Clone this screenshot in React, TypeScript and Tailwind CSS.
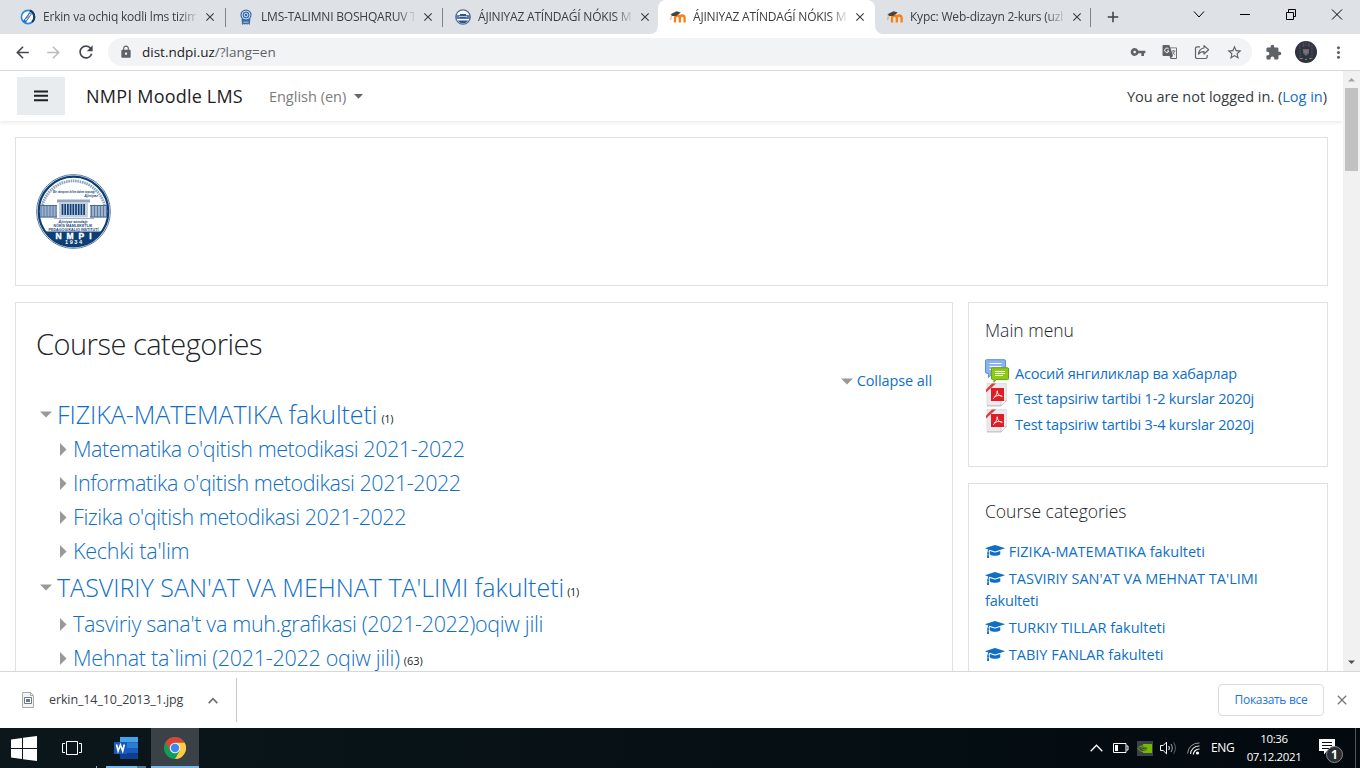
import React from "react";
import { MdVpnKey, MdExtension, MdStarBorder, MdMoreVert, MdLock, MdRefresh, MdArrowBack, MdArrowForward, MdClose, MdAdd } from "react-icons/md";

const UI = "font-['Open_Sans','Noto_Sans',sans-serif]";

function Seal({ size }: { size: number }) {
  const bars = Array.from({ length: 9 }, (_, i) => 26.5 + i * 2.7);
  const wings = Array.from({ length: 6 }, (_, i) => i * 3);
  return (
    <svg width={size} height={size} viewBox="0 0 75 75">
      <circle cx="37.5" cy="37.5" r="36.9" fill="#fff" stroke="#5b7ba3" strokeWidth="1" />
      <circle cx="37.5" cy="37.5" r="34.8" fill="#fff" stroke="#0d3f76" strokeWidth="2.2" />
      <path d="M6.5 31a32 32 0 0 1 62 0" fill="none" stroke="#8fa5c0" strokeWidth="2.8" strokeDasharray="1.6 .7" />
      <path d="M9.500 57.500h56a34 34 0 0 1-56 0z" fill="#0d3f76" />
      <path d="M4 31.5h17v12H4zM54 31.5h17v12H54z" fill="#9fb2c9" />
      {wings.map((x) => (
        <path key={x} d={`M${5 + x} 32v11M${55.5 + x} 32v11`} stroke="#567aa3" strokeWidth="1" />
      ))}
      <path d="M4 31.5h17M54 31.5h17M4 43h17M54 43h17" stroke="#456b98" strokeWidth="1" />
      <path d="M21 25.5h33v3H21z" fill="#8fa5c0" />
      <path d="M23 28.5h29v15H23z" fill="#c5d0de" />
      {bars.map((x) => (
        <path key={x} d={`M${x} 30v11`} stroke="#0d3f76" strokeWidth="1.7" />
      ))}
      <path d="M18 44.5h40" stroke="#9fb2c9" strokeWidth="1" />
      <g fontFamily="Liberation Sans, sans-serif" fontWeight="bold" fill="#1c4a7e" textAnchor="middle">
        <text x="38" y="19" fontSize="4.2" fontStyle="italic" textLength="42" lengthAdjust="spacingAndGlyphs">Bir tárepten bilim ádem tapsaǵı</text>
        <text x="55" y="23" fontSize="3.6" fontStyle="italic">Ájiniyaz</text>
        <text x="37" y="48.800" fontSize="4.400" fontStyle="italic" textLength="29" lengthAdjust="spacingAndGlyphs">Ájiniyaz atındaǵı</text>
        <text x="37" y="53" fontSize="4.400" textLength="39" lengthAdjust="spacingAndGlyphs">NÓKIS MÁMLEKETLIK</text>
        <text x="37.5" y="57.2" fontSize="4.400" textLength="50" lengthAdjust="spacingAndGlyphs">PEDAGOGIKALIQ INSTITUTÍ</text>
        <text x="37.5" y="65" fontSize="8.500" fill="#fff" stroke="#fff" strokeWidth=".4" textLength="36" lengthAdjust="spacing">NMPI</text>
        <text x="37.5" y="70.4" fontSize="5.6" fill="#fff" textLength="17" lengthAdjust="spacing">1934</text>
      </g>
    </svg>
  );
}

function SealSmall() {
  return (
    <svg width="16" height="16" viewBox="0 0 16 16">
      <circle cx="8" cy="8" r="7.2" fill="#fff" stroke="#4a6a98" strokeWidth="1.3" />
      <path d="M1 6h14v4H1z" fill="#5f7ca6" />
      <path d="M5 5h6v4H5z" fill="#2f568b" />
      <path d="M2.5 11.5h11a7 7 0 0 1-11 0z" fill="#2f568b" />
      <path d="M4 7.5h8" stroke="#dbe3ee" strokeWidth=".8" />
    </svg>
  );
}

function Compass() {
  return (
    <svg width="16" height="16" viewBox="0 0 16 16">
      <circle cx="8" cy="8" r="6.6" fill="#fff" stroke="#2a86d8" strokeWidth="1.6" />
      <path d="M10 1.500a7 7 0 0 1 2 11.500" fill="none" stroke="#173a5e" strokeWidth="2" />
      <path d="M2.500 12.800 9.600 3 12 4.800 6 13.400z" fill="#1f6fbf" />
      <path d="M5 11 10 4.400l.9.6-5 6.800z" fill="#fff" />
      <path d="M6.600 9.500 9 6.400" stroke="#e0563c" strokeWidth=".9" />
    </svg>
  );
}

function Rosette() {
  return (
    <svg width="16" height="16" viewBox="0 0 16 16">
      <path d="M3.600 10h8.800l-.6 6-1.600-1.200-1 1-1.200-1-1.200 1-1-1L4 16z" fill="#3a6ea8" />
      <circle cx="8" cy="6" r="5.600" fill="#3a6ea8" />
      <circle cx="8" cy="6" r="4" fill="none" stroke="#dce5ef" strokeWidth=".9" />
      <circle cx="8" cy="6" r="1.800" fill="none" stroke="#dce5ef" strokeWidth=".9" />
      <path d="M5.500 13.200h5" stroke="#dce5ef" strokeWidth=".8" />
    </svg>
  );
}

function MoodleM() {
  return (
    <svg width="16" height="16" viewBox="0 0 16 16">
      <path d="M5 13.500V9.200C5 5.600 9.800 5.600 9.800 9.200v4.300M9.800 9.200c0-3.600 4.800-3.600 4.800 0v4.300" fill="none" stroke="#f98012" strokeWidth="2.300" />
      <path d="M.5 5.200 6.500 2.300l4.300 1.200-4.600 3.400-4 .1z" fill="#444" />
      <path d="M1.500 5.500.700 11" stroke="#c98b52" strokeWidth=".7" />
    </svg>
  );
}

function Tab({ icon, title, active, sep, w }: { icon: React.ReactNode; title: string; active?: boolean; sep?: boolean; w: string }) {
  return (
    <div className={`relative flex h-[34px] shrink-0 items-center pl-3 ${w} ${active ? "rounded-t-lg bg-white" : ""}`}>
      {active && (
        <>
          <svg className="absolute -left-2 bottom-0" width="8" height="8"><path d="M8 0v8H0a8 8 0 0 0 8-8z" fill="#fff" /></svg>
          <svg className="absolute -right-2 bottom-0" width="8" height="8"><path d="M0 0v8h8a8 8 0 0 1-8-8z" fill="#fff" /></svg>
        </>
      )}
      <span className="shrink-0">{icon}</span>
      <div className="ml-[7px] w-[153px] overflow-hidden whitespace-nowrap text-[12px] tracking-[-0.2px] text-[#3c4043] [mask-image:linear-gradient(to_right,#000_136px,transparent_156px)]">
        <span>{title}</span>
      </div>
      <MdClose className="ml-[7px] shrink-0 text-[#3c4043]" size={14} />
      {sep && <div className="absolute right-0 top-[8px] h-[19px] w-px bg-[#808489]" />}
    </div>
  );
}

function TabStrip() {
  return (
    <div className="flex h-[34px] bg-[#dee1e6]">
      <div className="flex pl-2">
        <Tab w="w-[218px]" icon={<Compass />} title="Erkin va ochiq kodli lms tizimlari" sep />
        <Tab w="w-[217px]" icon={<Rosette />} title="LMS-TALIMNI BOSHQARUV TIZIMI" sep />
        <Tab w="w-[215px]" icon={<SealSmall />} title="ÁJINIYAZ ATÍNDAǴÍ NÓKIS MÁMLEKETLIK" />
        <Tab w="w-[217px]" icon={<MoodleM />} title="ÁJINIYAZ ATÍNDAǴÍ NÓKIS MÁMLEKETLIK" active />
        <Tab w="w-[216px]" icon={<MoodleM />} title="Курс: Web-dizayn 2-kurs (uzbek)" sep />
      </div>
      <MdAdd className="ml-[13px] mt-[8px] text-[#3c4043]" size={18} />
      <div className="ml-auto flex items-start pr-[17px] pt-[9px] text-black">
        <svg width="12" height="11" viewBox="0 0 12 11" className="mr-[34px]"><path d="M1 2.500l5 5.500 5-5.500" fill="none" stroke="currentColor" /></svg>
        <svg width="12" height="11" viewBox="0 0 12 11" className="mr-[34px]"><path d="M1 5.500h10" stroke="currentColor" /></svg>
        <svg width="12" height="11" viewBox="0 0 12 11" className="mr-[34px]"><path d="M1.500 3.500h7v7h-7zM3.500 3V.5h7v7H9" fill="none" stroke="currentColor" /></svg>
        <svg width="12" height="11" viewBox="0 0 12 11"><path d="M1 .5l10 10M11 .5l-10 10" fill="none" stroke="currentColor" /></svg>
      </div>
    </div>
  );
}

function Toolbar() {
  return (
    <div className="flex h-[37px] items-center border-b border-[#d5d7da] bg-white pl-[13px] pr-[14px] text-[#5f6368]">
      <MdArrowBack size={19} className="text-[#45484c]" />
      <MdArrowForward size={19} className="ml-[12px] text-[#babcbe]" />
      <MdRefresh size={20} className="ml-[13px] text-[#45484c]" />
      <div className="ml-3 flex h-[28px] flex-1 items-center rounded-full bg-[#f1f3f4] pl-[11px] pr-[9px]">
        <MdLock size={14} />
        <span className="ml-[9px] text-[13.5px] text-[#5f6368]"><span className="text-[#202124]">dist.ndpi.uz</span>/?lang=en</span>
        <div className="ml-auto flex items-center gap-4">
          <MdVpnKey size={16} />
          <svg width="16" height="16" viewBox="0 0 16 16">
            <path d="M1.500 1h5.800l1 2.500H14a1 1 0 0 1 1 1V14a1 1 0 0 1-1 1H8.500l-1-3h-6a1 1 0 0 1-1-1V2a1 1 0 0 1 1-1z" fill="#5f6368" />
            <path d="M8.600 4.300h5.500v9.800H9.100l1.900-2z" fill="#f1f3f4" />
            <path d="M6.700 5A2.200 2.200 0 1 0 7 7H5" fill="none" stroke="#f1f3f4" strokeWidth="1" />
            <path d="M9.800 7h3.600M11.600 6v1M12.600 7c-.4 1.600-1.400 2.800-2.400 3.500M10.600 8.200c.6 1.300 1.500 2 2.600 2.600" fill="none" stroke="#5f6368" strokeWidth=".8" />
          </svg>
          <svg width="16" height="16" viewBox="0 0 16 16" fill="none" stroke="#5f6368" strokeWidth="1.200" strokeLinejoin="round">
            <path d="M6 2.800H3.200a1.700 1.700 0 0 0-1.700 1.700v8.300a1.700 1.700 0 0 0 1.700 1.700h8.300a1.700 1.700 0 0 0 1.700-1.700V11" />
            <path d="M10 1.600l4.600 4.200L10 10V7.600c-2.500-.1-4.200.6-5.500 2.600.3-3.300 2-5.700 5.500-6.200z" />
          </svg>
          <MdStarBorder size={17} />
        </div>
      </div>
      <MdExtension size={17} className="ml-[13px]" />
      <svg className="ml-[13px]" width="22" height="22" viewBox="0 0 22 22">
        <circle cx="11" cy="11" r="11" fill="#2f3440" />
        <path d="M5 4v14M8 2v5M14 2v5M17 4v14M11 1v5" stroke="#4d5363" strokeWidth="1.200" strokeDasharray="1.500 1" />
        <path d="M8 8h6v4l-3 3-3-3z" fill="#5a6e80" />
        <path d="M9.500 9.500h3v2h-3z" fill="#c9604a" />
        <path d="M8 4h1.500M13 4h1.500" stroke="#b5484a" />
        <path d="M5.500 17.500h2M14.500 17.500h2" stroke="#b49a4a" />
        <path d="M10 18.500h2" stroke="#58a06a" />
      </svg>
      <MdMoreVert size={19} className="ml-[12px] -mr-[2px]" />
    </div>
  );
}

function Cap() {
  return (
    <svg className="inline-block align-[-2px]" width="20" height="15" viewBox="0 0 2304 1792" fill="#0f6fc5">
      <path d="M1774 836l18 316q4 69-82 128t-235 93.500-323 34.500-323-34.500-235-93.500-82-128l18-316 574 181q22 7 48 7t48-7zm530-324q0 23-22 31l-1120 352q-4 1-10 1t-10-1l-652-206q-43 34-71 111.500t-34 178.500q63 36 63 109 0 69-58 107l58 433q2 14-8 25-9 11-24 11h-192q-15 0-24-11-10-11-8-25l58-433q-58-38-58-107 0-73 65-111 11-207 98-330l-333-104q-22-8-22-31t22-31l1120-352q4-1 10-1t10 1l1120 352q22 8 22 31z" />
    </svg>
  );
}

function Down() {
  return <svg width="12" height="7" viewBox="0 0 12 7" className="shrink-0"><path d="M0 .5h12L6 6.500z" fill="#999" /></svg>;
}

function Sub({ children, count, tracking }: { children: React.ReactNode; count?: string; tracking: string }) {
  return (
    <div className="flex h-[34px] items-center whitespace-nowrap pl-[24px]">
      <svg width="7" height="13" viewBox="0 0 7 13" className="shrink-0"><path d="M0 0v13l6.500-6.500z" fill="#999" /></svg>
      <span className={`ml-[6px] text-[21.5px] font-light text-[#0f6fc5] ${tracking}`}>{children}</span>
      {count && <span className="ml-1 mt-[7px] text-[11px]">{count}</span>}
    </div>
  );
}

function Pdf() {
  return (
    <svg width="24" height="24" viewBox="0 0 24 24" className="shrink-0">
      <path d="M2 .5h19.500v17L16 23H2z" fill="#e9e9ee" stroke="#d0d0d6" strokeWidth=".6" />
      <path d="M2 22.800h14" stroke="#b5b5ba" strokeWidth=".8" />
      <path d="M16 23v-5.500h5.500z" fill="#fff" stroke="#bcbcc2" strokeWidth=".7" />
      <path d="M1 9.500V6.500L7 .5h4z" fill="#e23a36" />
      <path d="M6 5h13v13H6z" fill="#dc1f26" />
      <path d="M8 15.800c2-1 4.300-5 4.300-8.300M12.200 8c0 2.800 2.200 5.500 5.300 5.300M9 14c2.500-1.500 5.500-2 8-1" fill="none" stroke="#fff" strokeWidth=".8" />
    </svg>
  );
}

function Forum() {
  return (
    <svg width="24" height="24" viewBox="0 0 24 24" className="shrink-0">
      <path d="M1.500.7h18a1 1 0 0 1 1 1v11.600a1 1 0 0 1-1 1H7l-3.500 4.300v-4.300h-2a1 1 0 0 1-1-1V1.700a1 1 0 0 1 1-1z" fill="#8ab4ee" stroke="#5b8fd8" />
      <path d="M4.500 4.500h12M4.500 7.500h12M4.500 10.500h4" stroke="#fff" />
      <path d="M7.500 8.800h15a1 1 0 0 1 1 1v9.800a1 1 0 0 1-1 1H11L9 23.300v-2.700H7.500a1 1 0 0 1-1-1V9.800a1 1 0 0 1 1-1z" fill="#8ecb10" stroke="#62a30e" />
      <path d="M10 12.500h10M10 14.500h10M10 16.500h8" stroke="#fff" />
    </svg>
  );
}

function PageContent() {
  return (
    <div className="flex h-[600px] overflow-hidden bg-white text-[#212529]">
      <div className="w-[1343px] overflow-hidden">
        <div className="flex h-[50px] items-center pl-[17px] pr-[16px] shadow-[0_2px_4px_rgba(0,0,0,0.08)]">
          <div className="flex h-[38px] w-[48px] items-center justify-center bg-[#e9ecef]">
            <svg width="14" height="12" viewBox="0 0 14 12"><path d="M0 1.500h14M0 5.800h14M0 10.200h14" stroke="#1d2125" strokeWidth="2" /></svg>
          </div>
          <span className="ml-[21px] pt-px text-[18px] tracking-[0.2px] text-[#1d2125]">NMPI Moodle LMS</span>
          <span className="ml-[26px] pt-[2px] text-[14.5px] text-[#7c7c7c]">English (en)</span>
          <svg width="9" height="5" viewBox="0 0 9 5" className="ml-[8px]"><path d="M0 0h9L4.500 4.800z" fill="#666" /></svg>
          <span className="ml-auto pt-[2px] text-[14.5px] text-[#343a40]">You are not logged in. (<span className="text-[#0f6fc5]">Log in</span>)</span>
        </div>
        <div className="px-[15px] pt-4">
          <div className="flex h-[149px] items-center border border-[#dee2e6] pl-5"><Seal size={75} /></div>
          <div className="mt-4 flex items-start gap-[15px]">
            <div className="h-[400px] w-[938px] border border-[#dee2e6] pl-[20px] pr-[20px] pt-[20px]">
              <h2 className="flex h-[42px] items-center text-[29px] font-light tracking-[-0.5px]"><span>Course categories</span></h2>
              <div className="flex h-[32px] items-center justify-end">
                <Down /><span className="ml-1 text-[14.5px] tracking-[-0.08px] text-[#0f6fc5]">Collapse all</span>
              </div>
              <div className="flex h-[35px] items-center pl-[4px]">
                <Down /><span className="ml-[5px] text-[25px] font-light tracking-[-0.06px] text-[#0f6fc5]">FIZIKA-MATEMATIKA fakulteti</span>
                <span className="ml-1 mt-[9px] text-[11px] tracking-[-0.4px]">(1)</span>
              </div>
              <Sub tracking="tracking-[-0.44px]">Matematika o'qitish metodikasi 2021-2022</Sub>
              <Sub tracking="tracking-[-0.44px]">Informatika o'qitish metodikasi 2021-2022</Sub>
              <Sub tracking="tracking-[-0.42px]">Fizika o'qitish metodikasi 2021-2022</Sub>
              <Sub tracking="tracking-[-0.25px]">Kechki ta'lim</Sub>
              <div className="flex h-[39px] items-center pl-[4px]">
                <Down /><span className="ml-[5px] text-[25px] font-light text-[#0f6fc5]">TASVIRIY SAN'AT VA MEHNAT TA'LIMI fakulteti</span>
                <span className="ml-[3px] mt-[9px] text-[11px] tracking-[-0.4px]">(1)</span>
              </div>
              <Sub tracking="tracking-[-0.32px]">Tasviriy sana't va muh.grafikasi (2021-2022)oqiw jili</Sub>
              <Sub tracking="tracking-[-0.27px]" count="(63)">Mehnat ta`limi (2021-2022 oqiw jili)</Sub>
            </div>
            <div className="flex w-[360px] flex-col gap-4">
              <div className="h-[165px] border border-[#dee2e6] pl-4 pt-[13px]">
                <h5 className="flex h-[28px] items-center text-[17.5px] font-light"><span>Main menu</span></h5>
                <div className="mt-[13px] flex flex-col text-[14.5px] tracking-[-0.18px] text-[#0f6fc5]">
                  <div className="flex h-[26px]"><span className="pt-[2px]"><Forum /></span><span className="ml-[6px] pt-[6px]">Асосий янгиликлар ва хабарлар</span></div>
                  <div className="flex h-[26px]"><Pdf /><span className="ml-[6px] pt-[5px]">Test tapsiriw tartibi 1-2 kurslar 2020j</span></div>
                  <div className="flex h-[26px]"><Pdf /><span className="ml-[6px] pt-[5px]">Test tapsiriw tartibi 3-4 kurslar 2020j</span></div>
                </div>
              </div>
              <div className="h-[240px] border border-[#dee2e6] pl-4 pr-4 pt-[13px]">
                <h5 className="flex h-[28px] items-center text-[17.5px] font-light"><span>Course categories</span></h5>
                <div className="mt-[16px] flex flex-col gap-[5px] text-[14.5px] leading-[22px] text-[#0f6fc5]">
                  <div><Cap /> <span>FIZIKA-MATEMATIKA fakulteti</span></div>
                  <div><Cap /> <span>TASVIRIY SAN'AT VA MEHNAT TA'LIMI</span><br /><span className="tracking-[-0.2px]">fakulteti</span></div>
                  <div><Cap /> <span>TURKIY TILLAR fakulteti</span></div>
                  <div><Cap /> <span>TABIY FANLAR fakulteti</span></div>
                </div>
              </div>
            </div>
          </div>
        </div>
      </div>
      <div className="flex w-[17px] flex-col items-center bg-[#f1f1f1]">
        <svg width="17" height="17" viewBox="0 0 17 17"><path d="M5 10.500h7L8.500 7z" fill="#a3a3a3" /></svg>
        <div className="h-[83px] w-[13px] bg-[#c1c1c1]" />
        <svg className="mt-auto" width="17" height="17" viewBox="0 0 17 17"><path d="M5 6.500h7L8.500 10z" fill="#505050" /></svg>
      </div>
    </div>
  );
}

function DownloadBar() {
  return (
    <div className="flex h-[57px] items-center border-t border-[#d5d7da] bg-white">
      <svg width="12" height="16" viewBox="0 0 12 16" className="ml-[22px]">
        <path d="M.5.500h8l3 3v12H.5z" fill="#f4f4f4" stroke="#a9a9a9" />
        <path d="M8.500.500v3h3" fill="none" stroke="#a9a9a9" />
        <path d="M2.500 5.500h7v6h-7z" fill="#fff" stroke="#777" />
        <path d="M4 7h4v3H4z" fill="#4f7fa8" />
      </svg>
      <span className="ml-[15px] pt-px text-[12.5px] tracking-[-0.11px] text-[#3c4043]">erkin_14_10_2013_1.jpg</span>
      <svg width="10" height="7" viewBox="0 0 10 7" className="ml-[25px]"><path d="M.7 6.200 5 1.700l4.300 4.500" fill="none" stroke="#6b6f73" strokeWidth="1.700" /></svg>
      <div className="ml-[18px] h-[44px] w-px bg-[#c6c8ca]" />
      <div className="ml-auto flex h-[32px] w-[106px] items-center justify-center rounded border border-[#dadce0] text-[12px] font-medium tracking-[-0.3px] text-[#1a73e8]"><span>Показать все</span></div>
      <MdClose size={16} className="ml-[10px] mr-[10px] text-[#75797d]" />
    </div>
  );
}

function Taskbar() {
  return (
    <div className="flex h-[40px] items-stretch bg-linear-to-r from-[#0c171c] via-[#061015] to-[#030a0f] text-white">
      <div className="flex w-[48px] items-center justify-center">
        <svg width="26" height="25" viewBox="0 0 26 25" fill="#fff"><path d="M0 3.500 11 2v10H0zM12 1.800 26 0v12H12zM0 13h11v10L0 21.500zM12 13h14v12l-14-1.800z" /></svg>
      </div>
      <div className="flex w-[48px] items-center justify-center">
        <svg width="20" height="14" viewBox="0 0 20 14" fill="none" stroke="#fff"><path d="M4.500.500h11v13h-11zM3 2.500H.5v9H3M17 2.500h2.500v9H17" /></svg>
      </div>
      <div className="mr-[9px] h-[2px] w-px self-end bg-[#76b9ed]" />
      <div className="flex w-[40px] flex-col items-center justify-between">
        <svg width="24" height="22" viewBox="0 0 24 22" className="mt-[9px]">
          <path d="M6 0h18v5.500H6z" fill="#41a5ee" /><path d="M6 5.500h18V11H6z" fill="#2b7cd3" /><path d="M6 11h18v5.500H6z" fill="#185abd" /><path d="M6 16.500h18V22H6z" fill="#103f91" />
          <path d="M0 5h13v12H0z" fill="#185abd" />
          <path d="M2.500 7.500l1.600 6.500 2.300-6 2.300 6 1.600-6.500" fill="none" stroke="#fff" strokeWidth="1.700" />
        </svg>
        <div className="flex h-[2px] w-full"><div className="w-[31px] bg-[#76b9ed]" /><div className="w-[9px] bg-[#4a7ea6]" /></div>
      </div>
      <div className="ml-[5px] flex w-[48px] flex-col items-center justify-between bg-[#3b4247]">
        <svg width="22" height="22" viewBox="0 0 22 22" className="mt-[9px]">
          <circle cx="11" cy="11" r="11" fill="#0f9d58" />
          <path d="M11 5.500h9.530A11 11 0 0 1 11 22l4.760-8.250z" fill="#ffcd40" />
          <path d="M6.240 13.750 1.470 5.500A11 11 0 0 1 20.530 5.500H11z" fill="#db4437" />
          <circle cx="11" cy="11" r="5.300" fill="#f1f1f1" /><circle cx="11" cy="11" r="4.200" fill="#4285f4" />
        </svg>
        <div className="h-[2px] w-full bg-[#76b9ed]" />
      </div>
      <div className="ml-auto flex items-center">
        <svg width="13" height="8" viewBox="0 0 13 8"><path d="M.7 7.300 6.500 1.300l5.800 6" fill="none" stroke="#fff" strokeWidth="1.300" /></svg>
        <svg width="16" height="10" viewBox="0 0 16 10" className="ml-[10px]"><path d="M.5.500h12.500v9H.5zM13.500 3H15v4h-1.500" fill="none" stroke="#fff" /><path d="M2 2h3v6H2z" fill="#fff" /></svg>
        <svg width="16" height="15" viewBox="0 0 16 15" className="ml-[8px]"><path d="M0 0h16v15H0z" fill="#3b4247" /><path d="M6 3h9v9H6z" fill="#76b900" /><path d="M1 7.500C3 4.500 7 3.500 11 7.500 8 11.500 4 11.500 1 7.500z" fill="#3b4247" stroke="#76b900" /><path d="M4 7.500c1-2 4-2 5 0-1 1.800-3 1.800-3.500.3" fill="none" stroke="#76b900" /></svg>
        <svg width="17" height="14" viewBox="0 0 17 14" className="ml-[7px]" fill="none" stroke="#fff"><path d="M.5 4.500h2.700L6.500 1.200v11.600L3.200 9.500H.5z" /><path d="M8.700 5c.8 1.200.8 2.800 0 4" /><path d="M11 3c1.700 2.300 1.700 5.700 0 8" stroke="#aaa" /><path d="M13.500 1.300c2.500 3.300 2.500 8 0 11.400" stroke="#666" /></svg>
        <svg width="13" height="13" viewBox="0 0 13 13" className="ml-[10px]" fill="none"><path d="M.6 11.500A11 11 0 0 1 12.500 1" stroke="#999" /><path d="M3.500 12A8.500 8.500 0 0 1 12.500 4" stroke="#ddd" strokeWidth="1.200" /><path d="M6.300 12.500a6 6 0 0 1 6.200-5.500" stroke="#fff" strokeWidth="1.200" /><circle cx="10.500" cy="11" r="1.600" fill="#fff" /></svg>
        <span className="ml-[11px] w-[23px] text-[12px] tracking-[-0.4px]">ENG</span>
        <div className="ml-[13px] flex w-[54px] flex-col items-center whitespace-nowrap text-[11.5px] leading-[18px] tracking-[-0.4px]"><span>10:36</span><span>07.12.2021</span></div>
        <svg width="26" height="26" viewBox="0 0 26 26" className="ml-[18px] mt-[5px]">
          <path d="M0 1h16v12H8l-3 3.500V13H0z" fill="#fff" /><path d="M3 4.500h10M3 7.500h10M3 10.500h7" stroke="#0a1015" />
          <circle cx="15.500" cy="16.500" r="8" fill="#2b2f33" stroke="#888" />
          <text x="15.500" y="20.500" fontSize="12" fontWeight="bold" fill="#fff" textAnchor="middle">1</text>
        </svg>
        <div className="ml-[10px] mr-[4px] h-[40px] w-px bg-[#50575b]" />
      </div>
    </div>
  );
}

export default function App() {
  return (
    <div className={`h-[768px] w-[1360px] overflow-hidden bg-white ${UI}`}>
      <TabStrip />
      <Toolbar />
      <PageContent />
      <DownloadBar />
      <Taskbar />
    </div>
  );
}
